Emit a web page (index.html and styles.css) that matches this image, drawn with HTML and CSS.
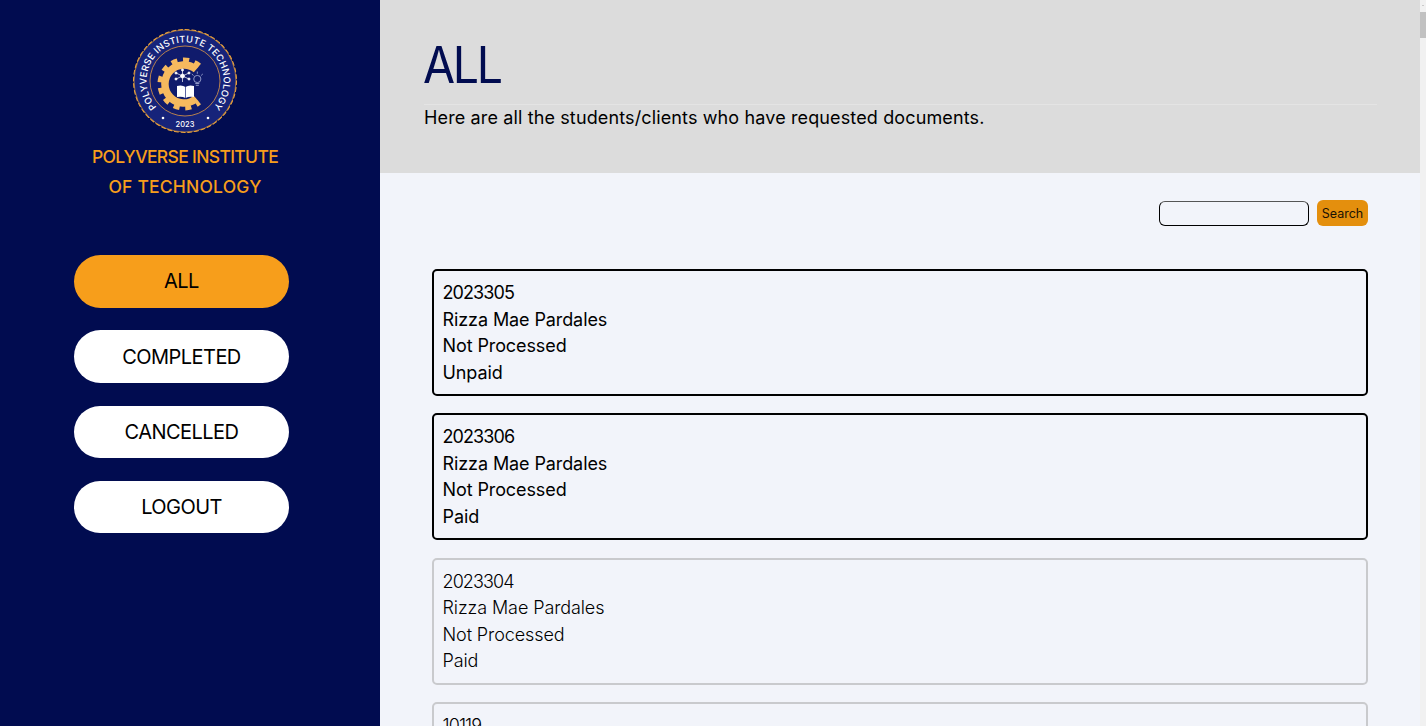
FILE: index.html
```html
<!DOCTYPE html>
<html lang="en">
<head>
<meta charset="utf-8">
<title>All requests</title>
<link rel="stylesheet" href="styles.css">
</head>
<body>
<div class="app">
  <aside class="sidebar">
    <div class="brand">
      <svg class="logo" viewBox="0 0 106 106" aria-hidden="true">
        <defs>
          <path id="ring" d="M 25.8 80.2 A 38.5 38.5 0 1 1 80.2 80.2"/>
        </defs>
        <circle cx="53" cy="53" r="51.2" fill="none" stroke="#f3a73a" stroke-width="1.6" stroke-dasharray="3.6 3.1" stroke-linecap="round"/>
        <circle cx="53" cy="53" r="51" fill="#16237a" stroke="#d9963a" stroke-width=".7"/>
        <circle cx="53" cy="53" r="35" fill="#101b6c" stroke="#c98b4a" stroke-width=".9"/>
        <text class="logo-ring" textLength="178" lengthAdjust="spacing"><textPath href="#ring" startOffset="50%" text-anchor="middle">POLYVERSE INSTITUTE TECHNOLOGY</textPath></text>
        <text class="logo-year" x="53" y="99" text-anchor="middle">2023</text>
        <circle cx="31" cy="90" r="1.3" fill="#fff"/>
        <circle cx="76" cy="90" r="1.3" fill="#fff"/>
        <g fill="none" stroke="#f6b95e">
          <path d="M 64.200 41.500 A 19 19 0 1 0 64.200 70.500" stroke-width="7.500"/>
          <path d="M 67.400 37.600 A 24 24 0 1 0 67.400 74.400" stroke-width="5" stroke-dasharray="6 5.600"/>
        </g>
        <g stroke="#fff" stroke-width=".7" fill="#fff">
          <path d="M 50.500 48 L 44 45 M 50.500 48 L 44 51 M 50.500 48 L 50.500 42 M 50.500 48 L 57 45 M 50.500 48 L 57 51 M 50.500 48 L 50.500 54" fill="none"/>
          <circle cx="50.500" cy="48" r="2"/>
          <circle cx="44" cy="45" r="1.100"/>
          <circle cx="44" cy="51" r="1.100"/>
          <circle cx="50.500" cy="42" r="1.100"/>
          <circle cx="57" cy="45" r="1.100"/>
          <circle cx="57" cy="51" r="1.100"/>
        </g>
        <path d="M 45 58 Q 50 56.500 53.500 59 Q 57 56.500 62 58 V 69 Q 57 68 53.500 70 Q 50 68 45 69 Z" fill="#fff"/>
        <path d="M 53.500 59 V 70" stroke="#16237a" stroke-width=".7"/>
        <g fill="none" stroke="#aeb6dc" stroke-width=".8">
          <circle cx="65.300" cy="51" r="3.600"/>
          <path d="M 63.300 55.500 H 67.300 M 63.800 57.300 H 66.800"/>
          <path d="M 65.300 43.500 V 45.800 M 59.800 46 L 61.500 47.500 M 70.800 46 L 69.100 47.500"/>
        </g>
      </svg>
      <div class="brand-name">POLYVERSE INSTITUTE<br><span class="brand-line">OF TECHNOLOGY</span></div>
    </div>
    <nav class="nav">
      <a class="nav-item is-active">ALL</a>
      <a class="nav-item">COMPLETED</a>
      <a class="nav-item">CANCELLED</a>
      <a class="nav-item">LOGOUT</a>
    </nav>
  </aside>
  <main class="main">
    <header class="hero">
      <h1 class="hero-title">ALL</h1>
      <hr class="hero-rule">
      <p class="hero-text">Here are all the students/clients who have requested documents.</p>
    </header>
    <section class="content">
      <form class="search">
        <input class="search-input" type="text" aria-label="Search">
        <button class="search-button" type="button">Search</button>
      </form>
      <div class="cards">
        <article class="card is-new"><span class="card-id">2023305</span><br>Rizza Mae Pardales<br>Not Processed<br>Unpaid</article>
        <article class="card is-new"><span class="card-id">2023306</span><br>Rizza Mae Pardales<br>Not Processed<br>Paid</article>
        <article class="card"><span class="card-id">2023304</span><br>Rizza Mae Pardales<br>Not Processed<br>Paid</article>
        <article class="card"><span class="card-id">10119</span><br>Rizza Mae Pardales<br>Not Processed<br>Paid</article>
      </div>
    </section>
  </main>
  <div class="rail" aria-hidden="true">
    <div class="rail-arrow"></div>
    <div class="rail-thumb"></div>
  </div>
</div>
</body>
</html>
```
FILE: styles.css
```css
* { box-sizing: border-box; }
html, body { margin: 0; height: 100%; overflow: hidden; }
body { font-family: Inter, "Noto Sans", sans-serif; color: #000; background: #f2f4fa; }
.app { display: flex; height: 726px; overflow: hidden; }

.sidebar { flex: 0 0 380px; background: #010c50; }
.brand { display: flex; flex-direction: column; align-items: center; padding: 28px 10px 0 0; }
.logo { display: block; width: 106px; height: 106px; }
.logo-ring { font: 500 9.300px Inter, sans-serif; fill: #fff; }
.logo-year { font: 500 7.500px Inter, sans-serif; fill: #fff; }
.brand-name { margin-top: 8px; color: #f79e1b; font-size: 17.500px; font-weight: 500; line-height: 30px; text-align: center; letter-spacing: -.65px; }
.brand-line { letter-spacing: .2px; }
.nav { display: flex; flex-direction: column; gap: 22.700px; width: 215px; margin: 53px 0 0 74px; }
.nav-item { display: flex; align-items: center; justify-content: center; height: 52.600px; border-radius: 27px; background: #fff; color: #000; font-size: 20px; letter-spacing: -.55px; }
.nav-item.is-active { background: #f79e1b; }

.main { flex: 1; min-width: 0; }
.hero { height: 173px; padding: 30px 43px 0 44px; background: #dcdcdc; }
.hero-title { margin: 0 0 0 -1px; height: 74px; color: #010c50; font-size: 50px; font-weight: 400; line-height: 70px; letter-spacing: -2.5px; transform: scaleX(.93); transform-origin: left center; }
.hero-rule { height: 1px; margin: 0; border: 0; background: #e4e4e4; }
.hero-text { margin: 0; font-size: 18px; line-height: 25px; letter-spacing: .13px; }

.content { padding: 27px 52px 0; }
.search { display: flex; justify-content: flex-end; align-items: center; gap: 8px; height: 26px; }
.search-input { width: 150px; height: 25px; padding: 0 6px; border: 1px solid #000; border-top-color: #555; border-radius: 6px; background: transparent; }
.search-button { width: 51px; height: 26px; padding: 0; border: 0; border-radius: 6px; background: #e48f0d; color: #1a1204; font: 400 12.500px Inter, sans-serif; }
.cards { display: flex; flex-direction: column; gap: 17.400px; margin-top: 43px; }
.card { height: 127px; padding: 9px 8.500px; border: 2px solid #c9cacd; border-radius: 5px; font-size: 18px; font-weight: 300; line-height: 26.500px; letter-spacing: -.1px; }
.card.is-new { border-color: #000; font-weight: 400; }
.card-id { letter-spacing: -.9px; }

.rail { flex: 0 0 6px; background: #f1f1f1; }
.rail-arrow { height: 12px; position: relative; }
.rail-arrow::before { content: ""; position: absolute; left: 1.500px; top: 4px; border: 1.500px solid transparent; border-bottom-color: #a3a3a3; }
.rail-thumb { height: 26px; background: #c1c1c1; }
```
